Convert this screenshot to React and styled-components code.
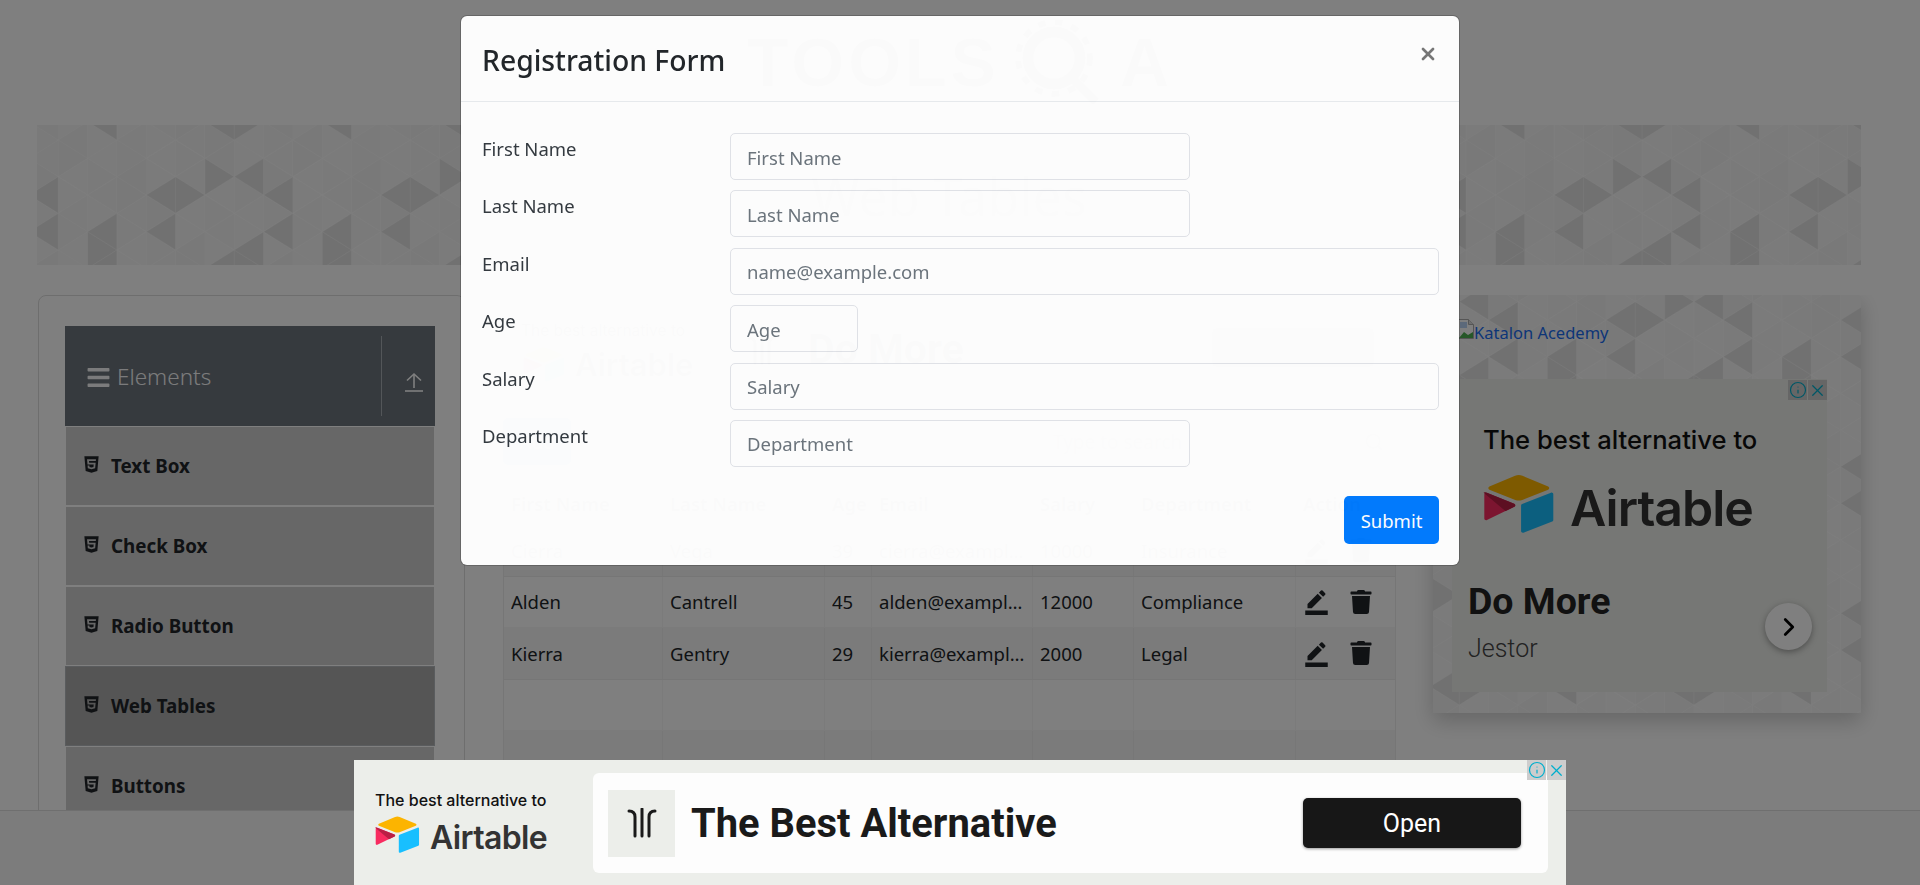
import React from 'react';
import styled, { createGlobalStyle } from 'styled-components';
import { FaBars, FaHtml5, FaTrash } from 'react-icons/fa';
import { MdBorderColor } from 'react-icons/md';
import { Info, X, ChevronRight, Search } from 'lucide-react';

const UI = '"Noto Sans", "Open Sans", sans-serif';
const AD = 'Inter, "Noto Sans", sans-serif';
const RB = 'Roboto, "Noto Sans", sans-serif';

const Global = createGlobalStyle`
  html, body { margin: 0; padding: 0; background: #fff; }
  * { box-sizing: border-box; }
  #root { width: 1920px; height: 885px; overflow: hidden; }
  input::placeholder { color: #6c757d; opacity: 1; }
`;

const Page = styled.div`
  position: relative; width: 1920px; height: 885px; overflow: hidden;
  display: flex; flex-direction: column; font-family: ${UI}; color: #212529; background: #fff;
`;
const Header = styled.header`
  height: 125px; flex: none; display: flex; justify-content: center; align-items: flex-start;
  padding: 20px 0 0 0; gap: 14px;
`;
const LogoWord = styled.span`
  font-family: "Liberation Sans", sans-serif; font-size: 68px; font-weight: 700; line-height: 84px;
  letter-spacing: 4px; color: #444;
`;
const Banner = styled.section`
  position: relative; flex: none; height: 140px; margin: 0 59px 0 37px; background: #f9f9f9;
  overflow: hidden; display: flex; align-items: center; justify-content: center;
`;
const BannerTitle = styled.h1`
  position: relative; margin: 0; font-size: 52px; font-weight: 400; color: #777;
`;
const PatternSvg = styled.svg`
  position: absolute; inset: 0; width: 100%; height: 100%;
`;
const Main = styled.main`
  flex: 1; min-height: 0; overflow: hidden; display: flex; align-items: flex-start;
  margin-top: 30px; padding-left: 38px;
`;
const Sidebar = styled.aside`
  flex: none; width: 427px; height: 620px; padding: 30px 29px 0 26px;
  border: 1px solid #dcdcdc; border-radius: 8px;
`;
const GroupHead = styled.div`
  height: 100px; background: #6c757d; color: #fff; display: flex; align-items: center;
  padding-left: 21px; font-size: 22.5px;
`;
const GroupName = styled.span`
  flex: 1; display: flex; align-items: center; gap: 6px; font-weight: 300; opacity: .95;
  svg { margin-top: 3px; }
`;
const GroupAction = styled.span`
  width: 54px; height: 80px; border-left: 1px solid #a6adb3; display: flex; align-items: center;
  justify-content: center; padding: 12px 0 0 10px;
`;
const MenuItem = styled.div`
  height: 78px; margin: ${p => (p.$first ? '1px' : '2px')} 1px 0; background: ${p => (p.$active ? '#aaaaaa' : '#cecece')};
  display: flex; align-items: center; gap: 10px; padding-left: 16px; font-size: 18.8px; font-weight: 700; color: #212529;
  outline: ${p => (p.$active ? '1px solid #b4b8bc' : 'none')};
  svg { margin-top: -4px; }
`;
const Center = styled.div`
  flex: none; width: 893px; margin-left: 38px; padding-top: 27px;
`;
const TopAd = styled.div`
  height: 80px; display: flex; align-items: flex-start; padding-left: 18px;
`;
const TopAdLead = styled.div`
  width: 226px; flex: none; font-family: ${AD}; font-size: 15.5px; line-height: 18px; color: #222;
`;
const TopAdBrand = styled.div`
  display: flex; align-items: center; gap: 8px; margin-top: 5px;
`;
const TopAdWord = styled.div`
  font-family: ${AD}; font-size: 31px; font-weight: 600; color: #333; line-height: 38px;
`;
const TopAdMark = styled.div`
  width: 61px; flex: none; margin-top: 13px;
`;
const TopAdTitle = styled.div`
  flex: 1; margin-top: 2px; font-family: ${RB}; font-size: 41px; line-height: 50px; font-weight: 700; color: #222;
`;
const TopAdButton = styled.div`
  width: 162px; height: 39px; margin: 6px 22px 0 0; background: #aaa; border-radius: 4px;
`;
const Toolbar = styled.div`
  margin-top: 16px; height: 47px; display: flex; justify-content: space-between;
`;
const AddButton = styled.div`
  width: 68px; background: #007bff; border-radius: 5px; color: #fff; display: flex; align-items: center; justify-content: center; font-size: 19px;
`;
const SearchBox = styled.div`
  width: 363px; display: flex; align-items: center; justify-content: space-between; padding: 0 12px 0 20px; font-size: 19px; color: #6c757d;
`;
const Table = styled.div`
  margin-top: 18px; border-left: 1px solid rgba(0,0,0,.07); border-right: 1px solid rgba(0,0,0,.07);
`;
const Row = styled.div`
  display: grid; grid-template-columns: 159px 162px 47px 161px 101px 162px 1fr;
  height: ${p => (p.$head ? '42px' : '51.6px')};
  background: ${p => (p.$odd ? 'rgba(0,0,0,.035)' : 'transparent')};
  border-bottom: 1px solid rgba(0,0,0,.035);
`;
const Cell = styled.div`
  padding: 0 7px; display: flex; align-items: center; font-size: 18.5px; color: #212529;
  font-weight: ${p => (p.$head ? 600 : 400)}; min-width: 0;
  border-right: 1px solid rgba(0,0,0,.03);
  &:last-child { border-right: 0; }
`;
const Clip = styled.span`
  display: block; overflow: hidden; white-space: nowrap; text-overflow: ellipsis; width: 100%;
`;
const Actions = styled.div`
  display: flex; align-items: center; gap: 19px; color: #212529;
`;
const SideCard = styled.aside`
  position: relative; flex: none; width: 428px; height: 418px; margin-left: 37px; background: #f9f9f9;
  box-shadow: 0 8px 20px rgba(0,0,0,.2); padding: 23px 34px 0 19px;
`;
const ImgLink = styled.a`
  position: relative; height: 61px; margin-left: 6px; display: flex; align-items: flex-start; color: #1a6cf0;
  font-size: 16.5px; line-height: 28px; padding-top: 1px;
`;
const SquareAd = styled.div`
  position: relative; width: 375px; height: 313px; background: #eceeea; padding: 46px 16px 0 16px;
`;
const AdLead = styled.div`
  font-family: ${AD}; font-size: ${p => p.$size}px; line-height: 1.2; font-weight: 500; color: #111;
  padding-left: ${p => p.$indent || 0}px; white-space: nowrap;
`;
const BrandRow = styled.div`
  display: flex; align-items: center; gap: ${p => p.$gap}px; padding-left: ${p => p.$indent || 0}px; margin-top: ${p => p.$top}px;
`;
const BrandWord = styled.span`
  font-family: ${AD}; font-size: ${p => p.$size}px; font-weight: 600; letter-spacing: -0.02em; color: #333; line-height: 1;
  padding-top: ${p => p.$drop || 0}px;
`;
const DoMore = styled.div`
  margin-top: 41px; font-family: ${RB}; font-weight: 700; font-size: 37.5px; line-height: 46px; color: #222;
`;
const Jestor = styled.div`
  margin-top: 9px; font-family: ${RB}; font-weight: 300; font-size: 25px; line-height: 32px; color: #444;
`;
const RoundButton = styled.div`
  position: absolute; right: 15px; bottom: 42px; width: 47px; height: 47px; border-radius: 50%; background: #fff;
  display: flex; align-items: center; justify-content: center; box-shadow: 0 2px 6px rgba(0,0,0,.35); color: #000;
`;
const AdBadges = styled.div`
  position: absolute; top: ${p => p.$top}px; right: 0; display: flex; gap: 1px;
`;
const AdBadge = styled.span`
  width: 19px; height: 20px; background: #cdcdcd; color: #00aecd; display: flex; align-items: center; justify-content: center;
`;
const Footer = styled.footer`
  flex: none; height: 75px; background: #f8f8f8; border-top: 1px solid #dedede;
`;
const Overlay = styled.div`
  position: absolute; inset: 0; z-index: 10; background: rgba(0,0,0,.5); display: flex; justify-content: center; align-items: flex-start; padding-top: 16px;
`;
const Modal = styled.div`
  width: 998px; height: 549px; background: #fff; opacity: .982; border-radius: 6px;
  box-shadow: 0 0 0 1px rgba(0,0,0,.2); display: flex; flex-direction: column;
`;
const ModalHead = styled.div`
  height: 86px; flex: none; border-bottom: 1px solid #e9ecef; display: flex; align-items: flex-start; justify-content: space-between; padding: 0 21px 0 21px;
`;
const ModalTitle = styled.h4`
  margin: 0; font-size: 28.3px; font-weight: 500; line-height: 88px; color: #212529;
`;
const Close = styled.span`
  margin-top: 28px; color: #777; display: flex;
`;
const ModalBody = styled.form`
  flex: 1; padding: 31px 20px 19px 21px; display: flex; flex-direction: column;
`;
const FormRow = styled.div`
  display: flex; height: 47px; margin-bottom: 10.4px;
`;
const Label = styled.label`
  width: 248px; flex: none; font-size: 18.5px; line-height: 32px; color: #343a40;
`;
const Field = styled.input`
  width: ${p => p.$w}px; height: 47px; border: 1.5px solid #e2e4e9; border-radius: 5px; padding: 1px 16px 0;
  font-family: ${UI}; font-size: 18.5px; color: #495057; background: transparent; outline: none;
`;
const Submit = styled.button`
  align-self: flex-end; margin-top: 19px; width: 95px; height: 48px; border: 0; border-radius: 5px; background: #007bff; color: #fff;
  font-family: ${UI}; font-size: 18.5px;
`;
const BottomAd = styled.div`
  position: absolute; z-index: 20; left: 354px; bottom: 0; width: 1212px; height: 125px; background: #eceeea;
  display: flex; padding: 13px 18px 12px 21px;
`;
const BottomLeft = styled.div`
  width: 218px; flex: none; padding-top: 18px;
`;
const BottomCard = styled.div`
  flex: 1; background: #fdfdfd; border-radius: 6px; display: flex; align-items: center; padding: 0 27px 0 15px;
`;
const MarkBox = styled.div`
  width: 67px; height: 67px; background: #eceeea; display: flex; align-items: center; justify-content: center; margin-right: 16px;
`;
const BottomTitle = styled.div`
  flex: 1; font-family: ${RB}; font-size: 39.9px; font-weight: 700; color: #1a1a1a;
`;
const OpenButton = styled.div`
  width: 218px; height: 50px; background: #171717; color: #fff; border-radius: 5px; box-shadow: 0 1px 3px rgba(0,0,0,.4);
  display: flex; align-items: center; justify-content: center; font-family: ${RB}; font-size: 25px;
`;

const STEP = 29.33, H = 18.33, PITCH = 36.67;
const DARK = new Set(['0L0','0L1','2L1','2L2','4L0','4R0','4L1','6L2','6R2','1R2','5R0','7L0','7L2']);
function Pattern({ width, height, x0, y0 }) {
  const tris = [];
  for (let p = -1; p * 8 * STEP < width; p++) {
    for (let j = 0; j < 8; j++) {
      const X = x0 + (p * 8 + j) * STEP;
      const base = (j % 2 ? 51.67 : 70) + y0;
      for (let r = -4; r < Math.ceil(height / PITCH) + 4; r++) {
        const cy = base + r * PITCH;
        if (cy < -H || cy > height + H) continue;
        const rr = ((r % 4) + 4) % 4;
        for (const d of ['L', 'R']) {
          const dark = DARK.has(`${j}${d}${rr}`);
          const sign = d === 'L' ? -1 : 1;
          const o = dark ? 0.085 : 0.006 + (((j * 7 + rr * 13 + (d === 'L' ? 3 : 0)) % 5) * 0.005);
          tris.push(
            <polygon key={`${p}-${j}-${r}-${d}`} points={`${X},${cy - H} ${X},${cy + H} ${X + sign * STEP},${cy}`}
              fill={`rgba(0,0,0,${o})`} stroke="#fff" strokeOpacity=".25" strokeWidth="1" />
          );
        }
      }
    }
  }
  return <PatternSvg aria-hidden="true">{tris}</PatternSvg>;
}

function AirtableMark({ w, shift = 0 }) {
  return (
    <svg width={w} viewBox="0 0 200 170" style={{ display: 'block', flex: 'none', marginLeft: shift }}>
      <path fill="#FCB400" d="M90.039 12.368 24.079 39.66c-3.667 1.519-3.63 6.729.062 8.192l66.235 26.266a24.58 24.58 0 0 0 18.12 0l66.236-26.266c3.69-1.463 3.729-6.673.062-8.192l-65.96-27.292a24.58 24.58 0 0 0-18.795 0" />
      <path fill="#18BFFF" d="M105.312 88.46v65.617c0 3.12 3.147 5.258 6.048 4.108l73.806-28.648a4.42 4.42 0 0 0 2.79-4.108V59.813c0-3.121-3.147-5.258-6.048-4.108l-73.806 28.648a4.42 4.42 0 0 0-2.79 4.108" />
      <path fill="#F82B60" d="M88.078 91.846l-21.904 10.576-2.224 1.075-46.238 22.155c-2.93 1.414-6.672-.722-6.672-3.978V60.088c0-1.178.604-2.195 1.414-2.96a5 5 0 0 1 1.12-.84c1.104-.663 2.68-.84 4.02-.31L87.71 83.76c3.564 1.414 3.844 6.408.368 8.087" />
      <path fill="#BA1E45" d="M88.078 91.846l-22.8 11-55.9-47.14c.4-.3.72-.5 1.1-.7 1.104-.663 2.68-.84 4.02-.31L87.71 83.76c3.564 1.414 3.844 6.408.368 8.087" />
    </svg>
  );
}
const Badges = ({ top }) => (
  <AdBadges $top={top}>
    <AdBadge><Info size={18} strokeWidth={1.6} /></AdBadge>
    <AdBadge><X size={19} strokeWidth={1.6} /></AdBadge>
  </AdBadges>
);
const JestorMark = () => (
  <svg width="30" height="30" viewBox="0 0 30 30" fill="none" stroke="#1a1a1a" strokeWidth="3" strokeLinecap="round">
    <path d="M2 3c4 0 6 2 6 6v19" /><path d="M15 1v27" /><path d="M28 3c-4 0-6 2-6 6v19" />
  </svg>
);
const UploadIcon = () => (
  <svg width="20" height="20" viewBox="0 0 20 20" fill="none" stroke="#fff" strokeWidth="1.6">
    <path d="M1 19h18" /><path d="M10 16V2" /><path d="M3 8.5 10 2l7 6.5" />
  </svg>
);
const BrokenImage = () => (
  <svg width="16" height="20" viewBox="0 0 16 20" style={{ flex: 'none', marginTop: 0 }}>
    <path d="M.5.5h10l5 5v14H.5z" fill="#fff" stroke="#aaa" />
    <path d="M10.5.5v5h5" fill="#ddd" stroke="#aaa" />
    <path d="M1 19l5-6 4 3 5-3v6z" fill="#4caf50" />
    <path d="M2 3h7v6H2z" fill="#b9d3f5" />
  </svg>
);
const GearQ = () => (
  <svg width="92" height="84" viewBox="0 0 92 84" fill="none" stroke="#444">
    <circle cx="40" cy="38" r="26" strokeWidth="11" />
    <circle cx="40" cy="38" r="36" strokeWidth="6" strokeDasharray="8 9" />
    <path d="M58 58 82 82" strokeWidth="9" />
  </svg>
);

const MENU = ['Text Box', 'Check Box', 'Radio Button', 'Web Tables', 'Buttons'];
const FIELDS = [
  ['First Name', 'First Name', 460], ['Last Name', 'Last Name', 460], ['Email', 'name@example.com', 709],
  ['Age', 'Age', 128], ['Salary', 'Salary', 709], ['Department', 'Department', 460],
];
const HEAD = ['First Name', 'Last Name', 'Age', 'Email', 'Salary', 'Department', 'Action'];
const ROWS = [
  ['Cierra', 'Vega', '39', 'cierra@example.com', '10000', 'Insurance'],
  ['Alden', 'Cantrell', '45', 'alden@example.com', '12000', 'Compliance'],
  ['Kierra', 'Gentry', '29', 'kierra@example.com', '2000', 'Legal'],
  null, null,
];

export default function App() {
  return (
    <Page>
      <Global />
      <Header><LogoWord>TOOLS</LogoWord><GearQ /><LogoWord>A</LogoWord></Header>
      <Banner>
        <Pattern width={1824} height={140} x0={21.3} y0={0} />
        <BannerTitle>Web Tables</BannerTitle>
      </Banner>
      <Main>
        <Sidebar>
          <GroupHead>
            <GroupName><FaBars size={25} />Elements</GroupName>
            <GroupAction><UploadIcon /></GroupAction>
          </GroupHead>
          {MENU.map((m, i) => (
            <MenuItem key={m} $first={i === 0} $active={m === 'Web Tables'}><FaHtml5 size={19} />{m}</MenuItem>
          ))}
        </Sidebar>
        <Center>
          <TopAd>
            <TopAdLead>
              The best alternative to
              <TopAdBrand><AirtableMark w={46} /><TopAdWord>Airtable</TopAdWord></TopAdBrand>
            </TopAdLead>
            <TopAdMark><JestorMark /></TopAdMark>
            <TopAdTitle>Do More</TopAdTitle>
            <TopAdButton />
          </TopAd>
          <Toolbar>
            <AddButton>Add</AddButton>
            <SearchBox>Type to search<Search size={20} /></SearchBox>
          </Toolbar>
          <Table>
            <Row $head>{HEAD.map(h => <Cell key={h} $head>{h}</Cell>)}</Row>
            {ROWS.map((r, i) => (
              <Row key={i} $odd={i % 2 === 0}>
                {(r || ['', '', '', '', '', '']).map((c, k) => <Cell key={k}><Clip>{c}</Clip></Cell>)}
                <Cell>{r && <Actions><MdBorderColor size={27} /><FaTrash size={24} /></Actions>}</Cell>
              </Row>
            ))}
          </Table>
        </Center>
        <SideCard>
          <Pattern width={428} height={418} x0={85} y0={-45} />
          <ImgLink><BrokenImage />Katalon Acedemy</ImgLink>
          <SquareAd>
            <Badges top={1} />
            <AdLead $size={25.6} $indent={15}>The best alternative to</AdLead>
            <BrandRow $gap={12} $indent={12} $top={15}>
              <AirtableMark w={78} /><BrandWord $size={50} $drop={8}>Airtable</BrandWord>
            </BrandRow>
            <DoMore>Do More</DoMore>
            <Jestor>Jestor</Jestor>
            <RoundButton><ChevronRight size={30} strokeWidth={2.2} /></RoundButton>
          </SquareAd>
        </SideCard>
      </Main>
      <Footer />
      <Overlay>
        <Modal>
          <ModalHead>
            <ModalTitle>Registration Form</ModalTitle>
            <Close><X size={20} strokeWidth={3.2} /></Close>
          </ModalHead>
          <ModalBody>
            {FIELDS.map(([l, ph, w]) => (
              <FormRow key={l}><Label>{l}</Label><Field $w={w} placeholder={ph} /></FormRow>
            ))}
            <Submit type="button">Submit</Submit>
          </ModalBody>
        </Modal>
      </Overlay>
      <BottomAd>
        <BottomLeft>
          <AdLead $size={16}>The best alternative to</AdLead>
          <BrandRow $gap={8} $top={4}>
            <AirtableMark w={49} shift={-2} /><BrandWord $size={32} $drop={5}>Airtable</BrandWord>
          </BrandRow>
        </BottomLeft>
        <BottomCard>
          <MarkBox><JestorMark /></MarkBox>
          <BottomTitle>The Best Alternative</BottomTitle>
          <OpenButton>Open</OpenButton>
        </BottomCard>
        <Badges top={0} />
      </BottomAd>
    </Page>
  );
}
